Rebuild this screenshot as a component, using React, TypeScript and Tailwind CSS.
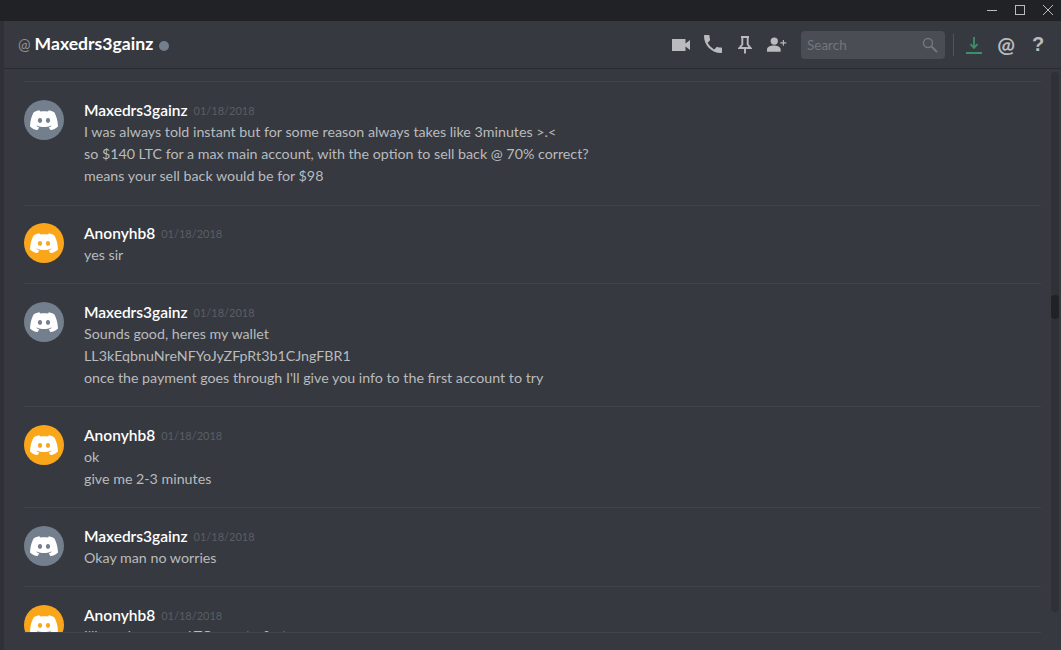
import React from "react";

const GREY = "#747f8d";
const ORANGE = "#faa61a";
const FONT = "font-['Lato',sans-serif]";

function Clyde({ color }: { color: string }) {
  return (
    <div className="w-10 h-10 mt-[1px] rounded-full flex items-center justify-center shrink-0" style={{ backgroundColor: color }}>
      <svg width="30" height="30" viewBox="0 0 30 30">
        <path
          fill="#fff"
          d="M10.2 5.2C7.6 5.7 5.9 6.4 4.6 7.5 3 10.2 1.3 14.8 1 21.4c1.900 2 4.700 3.300 7.600 3.500l1.600-2.500c-1 -.3-2-.8-2.800-1.400l.5-.4c4.400 2 9.800 2 14.200 0l.5.4c-.8.6-1.800 1.100-2.800 1.400l1.600 2.500c2.900-.2 5.700-1.500 7.600-3.500-.3-6.600-2-11.200-3.600-13.900-1.300-1.100-3-1.800-5.600-2.300l-.7 1.300c-3.100-.5-4.500-.5-7.600 0z"
        />
        <ellipse cx="11" cy="15.500" rx="2.100" ry="2.400" fill={color} />
        <ellipse cx="19" cy="15.500" rx="2.100" ry="2.400" fill={color} />
      </svg>
    </div>
  );
}

function Message({ name, color, lines, pad, clipped }: { name: string; color: string; lines: string[]; pad: string; clipped?: boolean }) {
  return (
    <div className={`border-t border-[#40444b] ${pad} mr-[20px] flex`}>
      <Clyde color={color} />
      <div className="ml-5 min-w-0">
        <div className="h-[22px] pt-[2px] flex items-center whitespace-nowrap">
          <span className="text-[15.500px] font-semibold text-white">{name}</span>
          <span className="ml-[6px] mt-[1px] text-[11px] text-[#5a5e64]">01/18/2018</span>
        </div>
        {lines.map((l) => (
          <div key={l} className={`text-[14.250px] leading-[22px] text-[#b9bbbe] whitespace-nowrap ${clipped ? "-mt-[1px]" : ""}`}>{l}</div>
        ))}
      </div>
    </div>
  );
}

function HeaderIcons() {
  return (
    <div className="ml-auto flex items-center">
      <svg width="18" height="12" viewBox="0 0 18 12"><path fill="#b9bbbe" d="M0 0h13.500v4.500L18 1v10l-4.500-3.500V12H0z" /></svg>
      <svg width="18" height="18" viewBox="3 3 18 18" className="ml-[14px] -mt-[2px]"><path fill="#b9bbbe" d="M6.620 10.790c1.440 2.830 3.760 5.140 6.590 6.590l2.200-2.200c.27-.27.670-.36 1.020-.24 1.120.37 2.330.57 3.570.57.550 0 1 .45 1 1V20c0 .55-.45 1-1 1-9.390 0-17-7.610-17-17 0-.55.45-1 1-1h3.500c.55 0 1 .45 1 1 0 1.250.2 2.450.57 3.570.11.35.03.74-.25 1.020l-2.200 2.200z" /></svg>
      <svg width="14" height="18" viewBox="0 0 14 18" className="ml-[16px]"><path fill="none" stroke="#b9bbbe" strokeWidth="1.900" d="M3 1h8M4.300 1v7.500L1.500 12h11l-2.800-3.500V1M7 12v5.500" /></svg>
      <svg width="20" height="15" viewBox="0 0 22 16" className="ml-[15px]">
        <circle cx="8" cy="4.200" r="4" fill="#b9bbbe" />
        <path fill="#b9bbbe" d="M0 16v-2.500c0-2.700 4-4.300 7.500-4.300s7.500 1.600 7.500 4.300V16z" />
        <path stroke="#b9bbbe" strokeWidth="1.200" d="M18 3v6.500M14.700 6.200h6.500" />
      </svg>
      <div className="ml-[14px] w-[144px] h-[28px] rounded-[4px] bg-[#4a4d53] flex items-center justify-between pl-[6px] pr-[7px]">
        <span className="text-[13.500px] text-[#72767d] mt-[1px]">Search</span>
        <svg width="16" height="16" viewBox="0 0 16 16"><circle cx="6" cy="6" r="4.500" fill="none" stroke="#72767d" strokeWidth="1.500" /><path d="M9.500 9.500l5.500 5.500" stroke="#72767d" strokeWidth="2" /></svg>
      </div>
      <div className="ml-[8px] w-px h-[22px] bg-[#4f545c]" />
      <svg width="16" height="18" viewBox="0 0 16 18" className="ml-[12px]"><path fill="none" stroke="#3d8f6b" strokeWidth="1.800" d="M8 1v10.500M4.500 8.200L8 12l3.500-3.800M0 17h16" /></svg>
      <span className="ml-[16px] -mt-[3px] w-[16px] flex justify-center text-[#b9bbbe] text-[21px] font-bold leading-none">@</span>
      <span className="ml-[18px] -mt-[2px] w-[12px] flex justify-center text-[#b9bbbe] text-[20px] font-bold leading-none font-['Liberation_Sans',sans-serif]">?</span>
    </div>
  );
}

export default function App() {
  return (
    <div className={`w-[1061px] h-[650px] overflow-hidden bg-[#36393f] flex flex-col ${FONT}`}>
      <div className="h-[21px] bg-[#202225] flex justify-end items-start pt-[5px] shrink-0 pr-[8px] gap-[18px]">
        <svg width="10" height="10" viewBox="0 0 10 10"><path d="M0 5.500h10" stroke="#b9bbbe" /></svg>
        <svg width="10" height="10" viewBox="0 0 10 10"><rect x=".5" y=".5" width="9" height="9" fill="none" stroke="#b9bbbe" /></svg>
        <svg width="10" height="10" viewBox="0 0 10 10"><path d="M0 0l10 10M10 0L0 10" stroke="#b9bbbe" /></svg>
      </div>
      <div className="flex flex-1 min-h-0">
        <div className="w-[4px] bg-[#2f3136] shrink-0" />
        <div className="flex-1 flex flex-col min-w-0">
          <div className="h-[48px] shrink-0 border-b border-[#292b2f] flex items-center pl-[14px] pr-[17px]">
            <span className="text-[#8e9297] text-[15px] mr-[4px]">@</span>
            <span className="text-white font-bold text-[17.600px]">Maxedrs3gainz</span>
            <span className="ml-[6px] w-[10px] h-[10px] mt-[2px] rounded-full bg-[#747f8d]" />
            <HeaderIcons />
          </div>
          <div className="flex-1 min-h-0 relative">
            <div className="h-full overflow-hidden pl-[20px] pt-[12px]">
              <Message pad="pt-[17px] pb-[18px]" name="Maxedrs3gainz" color={GREY} lines={["I was always told instant but for some reason always takes like 3minutes >.<", "so $140 LTC for a max main account, with the option to sell back @ 70% correct?", "means your sell back would be for $98"]} />
              <Message pad="pt-[16px] pb-[17px]" name="Anonyhb8" color={ORANGE} lines={["yes sir"]} />
              <Message pad="pt-[17px] pb-[17px]" name="Maxedrs3gainz" color={GREY} lines={["Sounds good, heres my wallet", "LL3kEqbnuNreNFYoJyZFpRt3b1CJngFBR1", "once the payment goes through I'll give you info to the first account to try"]} />
              <Message pad="pt-[17px] pb-[17px]" name="Anonyhb8" color={ORANGE} lines={["ok", "give me 2-3 minutes"]} />
              <Message pad="pt-[17px] pb-[17px]" name="Maxedrs3gainz" color={GREY} lines={["Okay man no worries"]} />
              <Message pad="pt-[17px] pb-[17px]" name="Anonyhb8" color={ORANGE} clipped lines={["I'll send over my LTC now to first"]} />
            </div>
            <div className="absolute right-[2px] top-[3px] bottom-[20px] w-[8px] rounded-full bg-[#2f3136]">
              <div className="absolute left-0 right-0 top-[223px] h-[24px] rounded-full bg-[#202225]" />
            </div>
          </div>
          <div className="h-[18px] shrink-0 bg-[#36393f] border-t border-[#40444b] mr-[20px] ml-[20px]" />
        </div>
      </div>
    </div>
  );
}
